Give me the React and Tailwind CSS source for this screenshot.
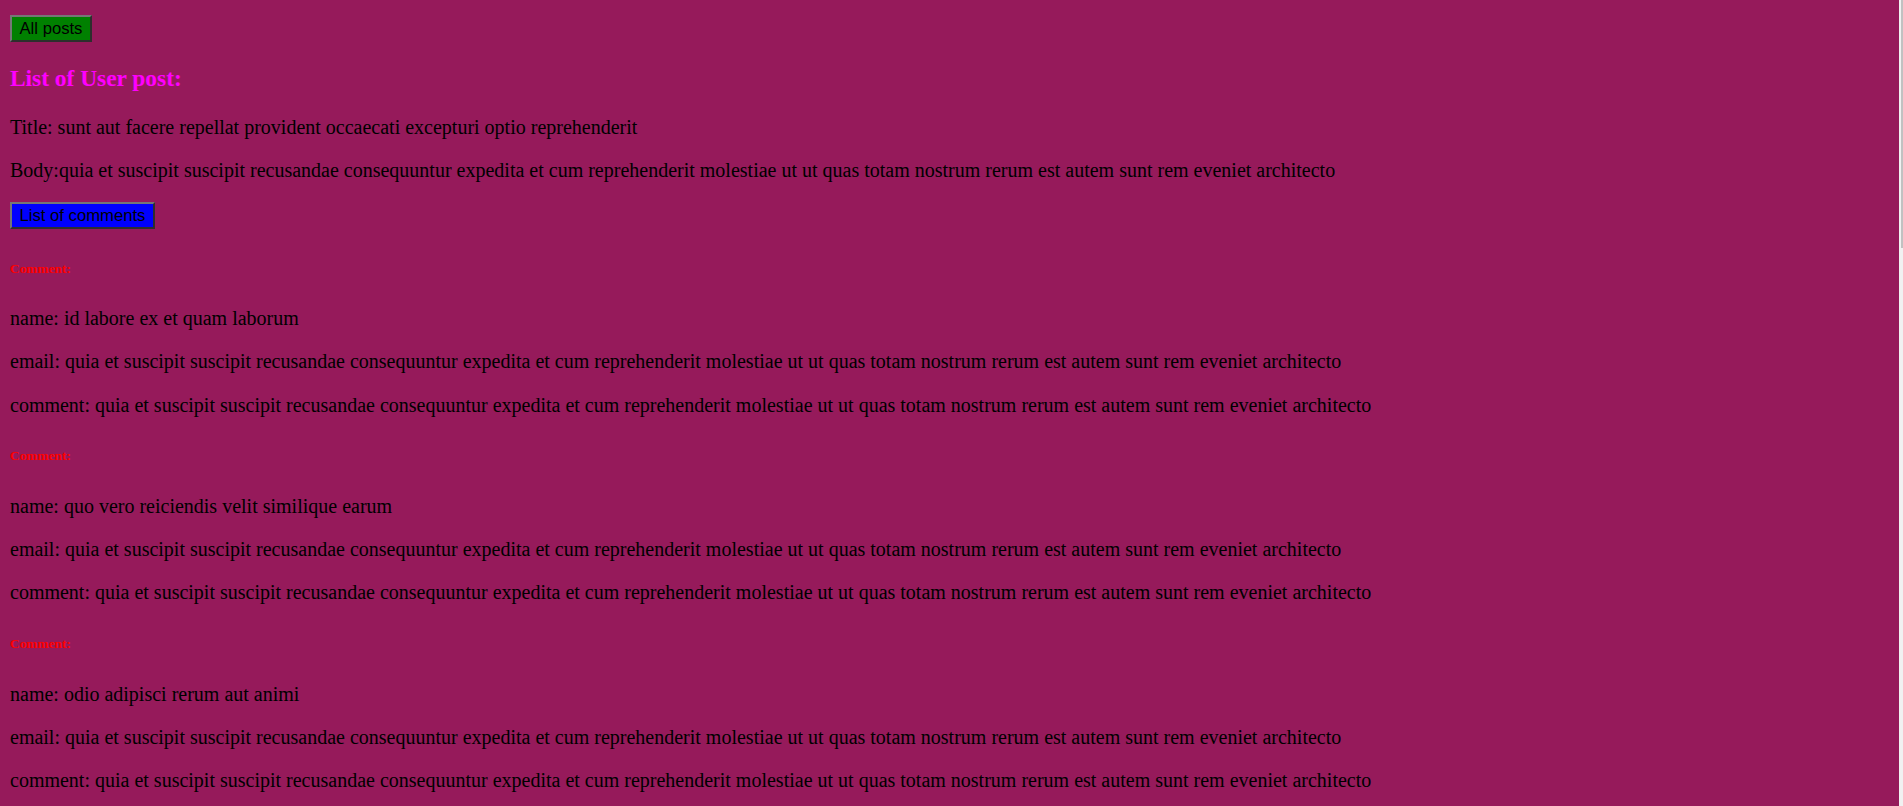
import React from 'react';

const BODY =
  'quia et suscipit suscipit recusandae consequuntur expedita et cum reprehenderit molestiae ut ut quas totam nostrum rerum est autem sunt rem eveniet architecto';

const comments = [
  { id: 1, name: 'id labore ex et quam laborum' },
  { id: 2, name: 'quo vero reiciendis velit similique earum' },
  { id: 3, name: 'odio adipisci rerum aut animi' },
];

const btn =
  "h-[27px] px-[7.5px] leading-[19px] border-2 border-t-[#767676] border-l-[#767676] border-b-[#2e2e2e] border-r-[#2e2e2e] font-['Liberation_Sans',Arial,sans-serif] text-[16.67px] text-black";

const App = () => {
  return (
    <div className="flex h-screen overflow-hidden">
      <div className="flex-1 overflow-hidden bg-[#961a5b] px-[10px] pt-[15px] font-['Liberation_Serif','Times_New_Roman',serif] text-[20px] leading-[23.3px] text-black">
        <div className="flex">
          <button className={`${btn} bg-[#008000]`}>All posts</button>
        </div>

        <h3 className="my-[23.4px] text-[23.4px] leading-[27px] font-bold text-[#ff00ff]">List of User post:</h3>

        <p className="my-[20px]">Title: sunt aut facere repellat provident occaecati excepturi optio reprehenderit</p>
        <p className="my-[20px]">Body:{BODY}</p>

        <div className="flex">
          <button className={`${btn} bg-[#0000ff]`}>List of comments</button>
        </div>

        {comments.map((c) => (
          <div key={c.id}>
            <h6 className="my-[31.2px] text-[13.4px] leading-[15.4px] font-bold text-[#ff0000]">Comment:</h6>
            <p className="my-[20px]">name: {c.name}</p>
            <p className="my-[20px]">email: {BODY}</p>
            <p className="my-[20px]">comment: {BODY}</p>
          </div>
        ))}
      </div>

      {/* scrollbar strip */}
      <div className="flex w-[4px] justify-end bg-[#f1f1f1]">
        <div className="h-[248px] w-[2px] bg-[#c1c1c1]" />
      </div>
    </div>
  );
};

export default App;
